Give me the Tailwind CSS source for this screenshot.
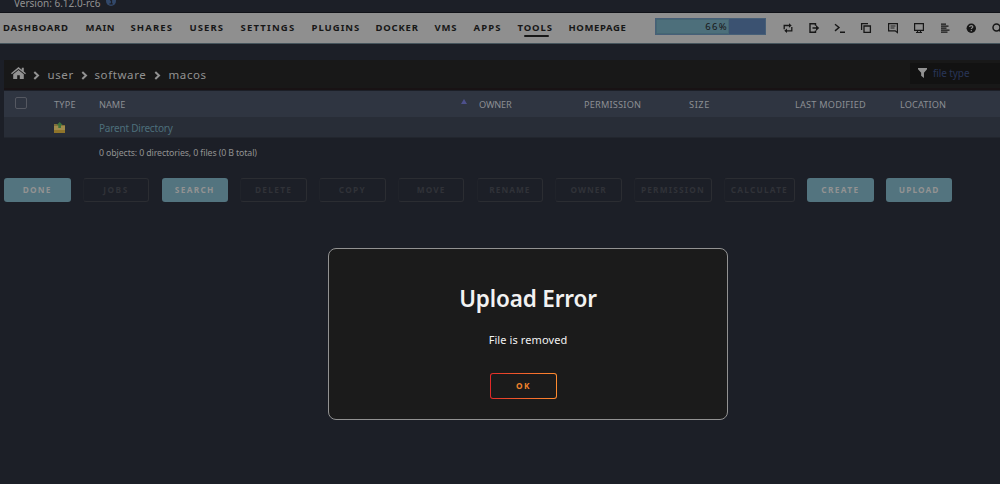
<!DOCTYPE html>
<html lang="en">
<head>
<meta charset="utf-8">
<title>File browser</title>
<script src="https://cdn.jsdelivr.net/npm/@tailwindcss/browser@4"></script>
</head>
<body class="h-[484px] w-[1000px] overflow-hidden bg-[#1c1f27] font-['Noto_Sans',sans-serif] text-[#929292]">
<div class="relative flex h-[484px] flex-col overflow-hidden whitespace-nowrap">
  <header class="flex h-3 shrink-0 items-end overflow-hidden pl-3.5 text-[10px] leading-none">
    <span class="mb-[4px] w-[92px]">Version: 6.12.0-rc6</span>
    <svg class="mb-[6px] size-[10px] shrink-0" viewBox="0 0 10 10"><circle cx="5" cy="5" r="5" fill="#32486a"/><path d="M4 4.2h1.500v3.500M3.500 7.800h3.200M4.500 2.200h1.200" stroke="#1c1f27" stroke-width="1.200" fill="none"/></svg>
  </header>
  <nav class="flex h-8 shrink-0 items-center border-t border-b border-t-[#101218] border-b-[#46555d] bg-[#8f8f8f] pl-[3px] text-[9.500px] font-bold text-[#171717] *:shrink-0">
    <span class="w-[82.500px] tracking-[.7px]">DASHBOARD</span>
    <span class="w-[45px] tracking-[.7px]">MAIN</span>
    <span class="w-[59px] tracking-[1.100px]">SHARES</span>
    <span class="w-[51px] tracking-[1.100px]">USERS</span>
    <span class="w-[71px] tracking-[1.200px]">SETTINGS</span>
    <span class="w-[64px] tracking-[1px]">PLUGINS</span>
    <span class="w-[59px] tracking-[.8px]">DOCKER</span>
    <span class="w-[39px] tracking-[.8px]">VMS</span>
    <span class="w-[44px] tracking-[1.100px]">APPS</span>
    <span class="relative w-[51px] tracking-[.9px]">TOOLS<i class="absolute top-[14px] left-[6px] h-[2px] w-[25px] rounded-full bg-[#171717]"></i></span>
    <span class="w-[86.500px] tracking-[.6px]">HOMEPAGE</span>
    <div class="mb-[3px] flex h-[17px] w-[111px] items-center border border-[#465f78] bg-[#3b5271]">
      <div class="flex h-[15px] w-[73px] items-center justify-end border border-[#456672] bg-[#4d6f7b] pt-px text-[9.500px] font-normal tracking-[1.300px]">66%</div>
    </div>
    <div class="ml-[16px] flex items-center gap-[14.150px] *:shrink-0">
      <svg class="size-3" viewBox="0 0 12 12" fill="none" stroke="#171717" stroke-width="1.300"><path d="M7.500 3.500H2.200v3.700M4.500 8.800h5.300V5"/><path d="M7 1.200v4.600l2.700-2.300zM5 6.500v4.600L2.300 8.800z" fill="#171717" stroke="none"/></svg>
      <svg class="size-3" viewBox="0 0 12 12" fill="none" stroke="#171717" stroke-width="1.400"><path d="M7.500 3.800V1.800H2v8.500h5.500V8.500M4.500 6H9"/><path d="m8 3 3.200 3L8 9z" fill="#171717" stroke="none"/></svg>
      <svg class="size-3" viewBox="0 0 12 12" fill="none" stroke="#171717" stroke-width="1.400"><path d="m1 2.200 4 3.300-4 3.400M6 10.200h5"/></svg>
      <svg class="size-3" viewBox="0 0 12 12" fill="none" stroke="#171717" stroke-width="1.300"><path d="M1.600 8V1.600H8M4 4h6.400v6.400H4z"/></svg>
      <svg class="size-3" viewBox="0 0 12 12" fill="none" stroke="#171717" stroke-width="1.200"><path d="M1.600 1.600h8.800v9L8.200 8.800H1.600z"/><path d="M3.500 4h5M3.500 6h4" stroke-width=".9"/></svg>
      <svg class="size-3" viewBox="0 0 12 12" fill="none" stroke="#171717" stroke-width="1.200"><path d="M1.600 1.600h8.800v6.800H1.600z"/><path d="M3 10.500h6M4.500 8.500v2M7.500 8.500v2"/></svg>
      <svg class="size-3" viewBox="0 0 12 12" fill="none" stroke="#171717" stroke-width="1.300"><path d="M2 2.200h5M2 4.200h7.500M2 6.200h5.500M2 8.200h8.500M2 10.200h6.500"/></svg>
      <svg class="size-3" viewBox="0 0 12 12"><circle cx="6.300" cy="6.200" r="4.700" fill="#171717"/><path d="M4.600 5c0-2 3.400-1.800 3.200 0-.1 1-1.500 1-1.500 2.100M6.300 8v1.300" fill="none" stroke="#8f8f8f" stroke-width="1.200"/></svg>
      <svg class="size-3" viewBox="0 0 12 12" fill="none" stroke="#171717" stroke-width="1.500"><circle cx="5.500" cy="5.500" r="3.500"/><path d="m8 8 3 3"/></svg>
    </div>
  </nav>
  <main class="flex flex-col pt-4 pl-1">
    <div class="flex h-[30px] items-center border-b-2 border-b-[#181214] bg-[#181818] text-[11.500px]">
      <svg class="mb-[2px] ml-[7px] h-3 w-[15px]" viewBox="0 0 15 12" fill="#929292"><path d="M7.500 0 0 6.200l.9 1L7.500 1.900l6.600 5.300.9-1-2.200-1.800V.8h-2v1.900z"/><path d="M7.500 2.900 2.200 7.200V12h4V8.300h2.600V12h4V7.200z"/></svg>
      <svg class="mt-[2px] ml-[7px] h-[9px] w-[7px]" viewBox="0 0 7 9" fill="none" stroke="#929292" stroke-width="2"><path d="m1.300 1 3.700 3.500L1.300 8"/></svg>
      <span class="mt-px ml-[7.500px] w-[33px] tracking-[.6px]">user</span>
      <svg class="mt-[2px] h-[9px] w-[7px]" viewBox="0 0 7 9" fill="none" stroke="#929292" stroke-width="2"><path d="m1.300 1 3.700 3.500L1.300 8"/></svg>
      <span class="mt-px ml-[7px] w-[59.500px] tracking-[.6px]">software</span>
      <svg class="mt-[2px] h-[9px] w-[7px]" viewBox="0 0 7 9" fill="none" stroke="#929292" stroke-width="2"><path d="m1.300 1 3.700 3.500L1.300 8"/></svg>
      <span class="mt-px ml-[7.500px] tracking-[.6px]">macos</span>
      <div class="mb-[2px] ml-auto flex h-[21px] w-[90px] items-center bg-[#121212] pl-2">
        <svg class="mb-px h-[10px] w-[9px]" viewBox="0 0 8 10" preserveAspectRatio="none" fill="#929292"><path d="M0 0h8v1.300L5.300 4.800V10L2.800 7.800v-3L0 1.300z"/></svg>
        <span class="ml-[6px] text-[10px] tracking-[-.1px] text-[#293658]">file type</span>
      </div>
    </div>
    <div class="mt-px flex h-[26px] items-center bg-[#2f3541] text-[9.200px] text-[#8b8e93]">
      <i class="mb-[2px] ml-[11px] size-[12px] rounded-[2px] border border-[#555861]"></i>
      <span class="mt-[2px] ml-[27px] w-[45px] tracking-[.2px]">TYPE</span>
      <span class="mt-[2px] w-[362px] tracking-[0]">NAME</span>
      <i class="mb-[5px] h-0 w-0 border-x-[3px] border-b-[5px] border-x-transparent border-b-[#4d508b]"></i>
      <span class="mt-[2px] ml-[12px] w-[105px] tracking-[-.2px]">OWNER</span>
      <span class="mt-[2px] w-[105px] tracking-[.2px]">PERMISSION</span>
      <span class="mt-[2px] w-[106px] tracking-[.6px]">SIZE</span>
      <span class="mt-[2px] w-[105px] tracking-[.2px]">LAST MODIFIED</span>
      <span class="mt-[2px] tracking-[.1px]">LOCATION</span>
    </div>
    <div class="flex h-[21px] items-center border-b border-b-[#22262e] bg-[#282d37] text-[10px]">
      <svg class="ml-[50px] h-[11px] w-[11px]" viewBox="0 0 11 11"><path d="M0 2h4l1 1h6v8H0z" fill="#81703a"/><path d="M0 4h11v7H0z" fill="#a08b4d"/><path d="M0 8h11v3H0z" fill="#8f742a"/><path d="m5.700 0 3 3H7v3H4.300V3H2.600z" fill="#3d733c"/></svg>
      <span class="mt-[2px] ml-[34px] tracking-[-.2px] text-[#4d6f7b]">Parent Directory</span>
    </div>
    <div class="mt-[7px] h-4 pl-[95px] text-[8.800px] leading-4 tracking-[-.12px]">0 objects: 0 directories, 0 files (0 B total)</div>
    <div class="mt-[17px] flex h-6 gap-[12.270px] text-[8.300px] leading-none font-bold">
      <button class="w-[66.500px] rounded-[3px] bg-[#53747f] pt-px tracking-[1.200px]">DONE</button>
      <button class="w-[66.500px] rounded-[3px] border border-[#2b2d32] border-l-[#20232a] pt-px tracking-[1.500px] text-[#303238]">JOBS</button>
      <button class="w-[66.500px] rounded-[3px] bg-[#53747f] pt-px tracking-[1.300px]">SEARCH</button>
      <button class="w-[66.500px] rounded-[3px] border border-[#2b2d32] border-l-[#20232a] pt-px tracking-[1.300px] text-[#303238]">DELETE</button>
      <button class="w-[66.500px] rounded-[3px] border border-[#2b2d32] border-l-[#20232a] pt-px tracking-[1.300px] text-[#303238]">COPY</button>
      <button class="w-[66.500px] rounded-[3px] border border-[#2b2d32] border-l-[#20232a] pt-px tracking-[1.100px] text-[#303238]">MOVE</button>
      <button class="w-[66.500px] rounded-[3px] border border-[#2b2d32] border-l-[#20232a] pt-px tracking-[1px] text-[#303238]">RENAME</button>
      <button class="w-[66.500px] rounded-[3px] border border-[#2b2d32] border-l-[#20232a] pt-px tracking-[1px] text-[#303238]">OWNER</button>
      <button class="w-[77.500px] rounded-[3px] border border-[#2b2d32] border-l-[#20232a] pt-px tracking-[1.200px] text-[#303238]">PERMISSION</button>
      <button class="w-[71px] rounded-[3px] border border-[#2b2d32] border-l-[#20232a] pt-px tracking-[1.200px] text-[#303238]">CALCULATE</button>
      <button class="w-[66.500px] rounded-[3px] bg-[#53747f] pt-px tracking-[1.400px]">CREATE</button>
      <button class="w-[66.500px] rounded-[3px] bg-[#53747f] pt-px tracking-[1.100px]">UPLOAD</button>
    </div>
  </main>
  <div class="absolute top-[248px] left-[328px] flex h-[172px] w-[400px] flex-col items-center rounded-[8px] border border-[#929292] bg-[#1b1b1b] text-[#f2f2f2]">
    <h2 class="mt-[34px] text-[22.500px] leading-8 font-semibold tracking-[-.15px]">Upload Error</h2>
    <p class="mt-[17px] text-[11px] leading-4 tracking-[.1px]">File is removed</p>
    <button class="mt-[25px] mr-[9px] h-[26px] w-[67px] rounded-[3px] bg-linear-to-r from-[#e22828] to-[#ff8c2f] p-px">
      <span class="flex h-full items-center justify-center rounded-[2px] bg-[#1b1b1b] text-[8.300px] font-bold tracking-[1.500px] text-[#ef832c]">OK</span>
    </button>
  </div>
</div>
</body>
</html>
